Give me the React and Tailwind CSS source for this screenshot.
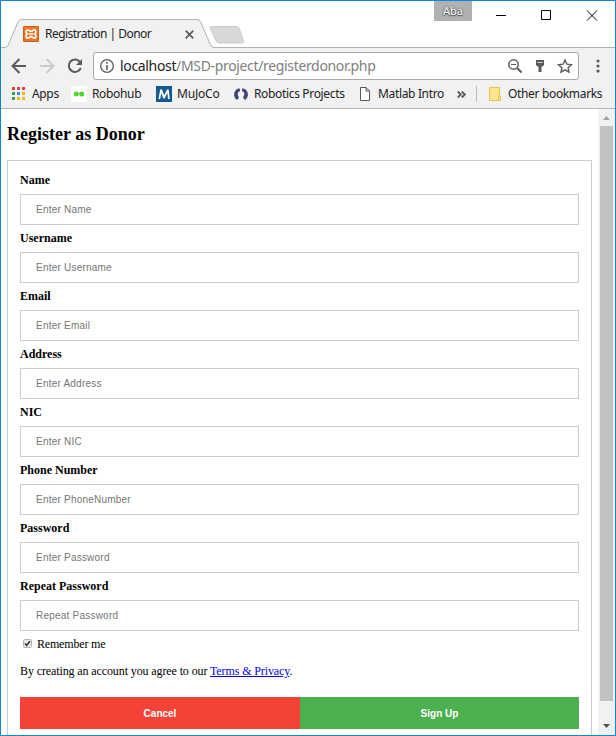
const fields = [
  ['Name', 'Enter Name'],
  ['Username', 'Enter Username'],
  ['Email', 'Enter Email'],
  ['Address', 'Enter Address'],
  ['NIC', 'Enter NIC'],
  ['Phone Number', 'Enter PhoneNumber'],
  ['Password', 'Enter Password'],
  ['Repeat Password', 'Repeat Password'],
];

function TitleBar() {
  return (
    <header className="relative h-[47px] shrink-0 bg-white">
      <svg className="absolute left-0 top-0" width="614" height="47" viewBox="1 1 614 47" fill="none">
        <path d="M1 47.5H5Q7 47.5 8 45.5L18 22Q19.3 19.5 21.5 19.5H197Q199.5 19.5 200.7 22L210.5 45Q211.5 47.5 214 47.5V49H1Z" fill="#f1f1f1" />
        <path d="M1 47.5H5Q7 47.5 8 45.5L18 22Q19.3 19.5 21.5 19.5H197Q199.5 19.5 200.7 22L210.5 45Q211.5 47.5 214 47.5H615" stroke="#b0b0b0" />
        <path d="M211.5 26.5H236.5Q238.5 26.5 239.3 28.5L243.5 41Q244 43 242 43H219Q217 43 216 41L210.3 28.5Q209.5 26.5 211.5 26.5Z" fill="#d8d8d8" stroke="#cbcbcb" />
        <path d="M496 15.5H506M541.5 10.5H550.5V19.5H541.5ZM587 10.5L597 20.5M597 10.5L587 20.5" stroke="#000" />
      </svg>
      <div className="relative flex h-full items-start">
        <div className="ml-[22px] mt-[25px] flex h-4 items-center">
          <svg width="16" height="16" viewBox="0 0 16 16" fill="none">
            <rect width="16" height="16" rx="1" fill="#ee7525" />
            <rect x=".5" y=".5" width="15" height="15" rx="1" stroke="#c9601f" />
            <path d="M4.200 8C2.700 7 2.700 3.800 4.700 3.800C6.300 3.800 6.500 5.300 8 5.300S9.700 3.800 11.300 3.800C13.300 3.800 13.300 7 11.800 8C13.300 9 13.300 12.200 11.300 12.200C9.700 12.200 9.500 10.700 8 10.700S6.300 12.200 4.700 12.200C2.700 12.200 2.700 9 4.200 8ZM6 8H10" stroke="#fff" strokeWidth="1.700" />
          </svg>
          <span className="ml-[6px] w-[140px] whitespace-nowrap text-[12px] leading-4 tracking-[-0.53px] text-[#222]">Registration | Donor</span>
          <svg width="9" height="9" viewBox="0 0 9 9" className="mt-px"><path d="M.7.7L8.300 8.300M8.300.7L.7 8.300" stroke="#5a5a5a" strokeWidth="1.700" /></svg>
        </div>
        <div className="ml-[240px] flex h-5 w-[38px] items-center justify-center bg-[#b1b1b1] text-[11px] text-white [text-shadow:0_0_2px_#333,0_1px_1px_#555]">Aba</div>
      </div>
    </header>
  );
}

function Toolbar() {
  return (
    <div className="flex h-8 shrink-0 items-center">
      <svg width="92" height="32" viewBox="1 48 92 32" fill="none" strokeWidth="2">
        <path d="M26 66H12.500M19.500 59L12.500 66L19.500 73" stroke="#5a5a5a" />
        <path d="M40 66H53.500M46.500 59L53.500 66L46.500 73" stroke="#ccc" />
        <path d="M80.200 62.200A6.200 6.200 0 1 0 80.800 68" stroke="#5a5a5a" />
        <path d="M82 59V65H76Z" fill="#5a5a5a" />
      </svg>
      <div className="mt-1 flex h-7 w-[486px] shrink-0 items-center rounded-[3px] border border-[#a9a9a9] bg-white">
        <svg className="ml-[6px]" width="14" height="14" viewBox="0 0 14 14" fill="none" stroke="#5a5a5a">
          <circle cx="7" cy="7" r="6.300" strokeWidth="1.300" /><path d="M7 6V11M7 3V4.800" strokeWidth="1.600" />
        </svg>
        <span className="ml-[6px] w-[387px] whitespace-nowrap text-[14px] leading-5 tracking-[-0.34px] text-[#808080]"><span className="text-[#222]">localhost</span>/MSD-project/registerdonor.php</span>
        <svg width="66" height="26" viewBox="507 53 66 26" fill="none" stroke="#5a5a5a">
          <circle cx="513.500" cy="64.500" r="4.700" strokeWidth="1.500" /><path d="M517 68L521.500 72.500" strokeWidth="2" /><path d="M511 64.500H516" />
          <path d="M536 60H544V65L542.500 66.500H541.500V72H538.500V66.500H537.500L536 65Z" fill="#5a5a5a" stroke="none" /><path d="M537.500 62.500H542.500" stroke="#ddd" />
          <path d="M565 60L566.900 64.200L571.500 64.700L568.100 67.700L569 72.200L565 69.900L561 72.200L561.900 67.700L558.500 64.700L563.100 64.200Z" strokeWidth="1.400" />
        </svg>
      </div>
      <svg className="ml-[17px] mt-1" width="4" height="14" viewBox="0 0 4 14" fill="#5a5a5a"><circle cx="2" cy="2" r="1.600" /><circle cx="2" cy="7" r="1.600" /><circle cx="2" cy="12" r="1.600" /></svg>
    </div>
  );
}

function Bookmarks() {
  return (
    <nav className="flex h-[29px] shrink-0 items-center whitespace-nowrap border-b border-[#b6b6b6] text-[12px] leading-4 tracking-[-0.34px] text-[#222]">
      <svg className="ml-[11px] mt-[-1px]" width="13" height="13" viewBox="0 0 13 13">
        <path d="M0 0H3V3H0ZM5 0H8V3H5ZM10 0H13V3H10Z" fill="#ea4335" />
        <path d="M0 5H3V8H0ZM0 10H3V13H0Z" fill="#34a05a" /><path d="M5 5H8V8H5Z" fill="#4285f4" />
        <path d="M10 5H13V8H10ZM5 10H8V13H5ZM10 10H13V13H10Z" fill="#f9b418" />
      </svg>
      <span className="ml-[7px] w-[39px]">Apps</span>
      <svg width="16" height="16" viewBox="0 0 16 16"><path d="M0 0H16V16H0Z" fill="#fff" /><g fill="#48d92b"><circle cx="5.300" cy="8" r="2.500" /><circle cx="10.700" cy="8" r="2.500" /></g></svg>
      <span className="ml-[5px] w-[64px]">Robohub</span>
      <svg width="16" height="16" viewBox="0 0 16 16"><path d="M0 0H16V16H0Z" fill="#155b91" /><path d="M2.500 13L4.200 3.500H6L8.200 9.300L11 3.500H12.700L13.700 13H12L11.400 7L8.700 12.500H7.400L5.200 7L4.200 13Z" fill="#fff" /></svg>
      <span className="ml-[5px] w-[56px] tracking-[-0.2px]">MuJoCo</span>
      <svg width="16" height="16" viewBox="0 0 16 16" fill="#424579"><path d="M6.700 2.200L7 5L5 6.500L4.700 9L6 11.500L4 14L2.300 12.500L1 9.500L1.500 6L3.500 3.200ZM9.300 2.200L9 5L11 6.500L11.300 9L10 11.500L12 14L13.700 12.500L15 9.500L14.500 6L12.500 3.200Z" /></svg>
      <span className="ml-[5px] w-[106px]">Robotics Projects</span>
      <svg width="10" height="14" viewBox="0 0 10 14" fill="white" stroke="#5a5a5a"><path d="M.5.5H6L9.500 4V13.500H.5ZM6 .5V4H9.500" /></svg>
      <span className="ml-[8px] w-[79px]">Matlab Intro</span>
      <svg width="9" height="7" viewBox="0 0 9 7" fill="none" stroke="#5a5a5a" strokeWidth="1.900"><path d="M.8.5L3.800 3.500L.8 6.500M4.800.5L7.800 3.500L4.800 6.500" /></svg>
      <span className="ml-[10px] h-4 w-px bg-[#bdbdbd]" />
      <svg className="ml-[12px]" width="12" height="14" viewBox="0 0 12 14" fill="#ffe591" stroke="#e9c24d"><path d="M.5.5H10.500V9.500H11.500V13.500H.5ZM9.500 13V10L10.500 9.500" /></svg>
      <span className="ml-[7px]">Other bookmarks</span>
    </nav>
  );
}

function Field({ label, hint }) {
  return (
    <label className="mb-[5px] block">
      <span className="block h-4 text-[12px] font-bold leading-4">{label}</span>
      <input placeholder={hint} className="mt-[6px] block h-[31px] w-full border border-[#ccc] px-[15px] font-['Liberation_Sans',Arial,sans-serif] text-[10px] tracking-[0.22px] placeholder:text-[#757575]" />
    </label>
  );
}

export default function App() {
  return (
    <div className="flex h-[736px] w-[616px] flex-col overflow-hidden border border-[#1883d7] bg-[#f1f1f1] font-['Noto_Sans','Open_Sans',sans-serif]">
      <TitleBar />
      <Toolbar />
      <Bookmarks />
      <div className="flex min-h-0 flex-1 bg-white">
        <main className="w-[597px] overflow-hidden pl-[6px] font-['Liberation_Serif','Times_New_Roman',serif] text-black">
          <h2 className="mt-[14px] h-[22px] text-[18px] font-bold leading-[22px]">Register as Donor</h2>
          <form className="mt-[15px] h-[590px] w-[585px] border border-[#ccc] px-3 pt-[11px]">
            {fields.map(([label, hint]) => <Field key={label} label={label} hint={hint} />)}
            <div className="flex h-4 items-center text-[12px] leading-4 tracking-[-0.18px]">
              <svg className="mb-px ml-[3px] mr-[5px]" width="9" height="9" viewBox="0 0 9 9" fill="none"><rect x=".5" y=".5" width="8" height="8" rx="1" fill="#e6e6e6" stroke="#b5b5b5" /><path d="M2 4.500L3.700 6.300L7 2.300" stroke="#333" strokeWidth="1.500" /></svg>
              Remember me
            </div>
            <p className="mt-[11px] h-4 text-[12px] leading-4 tracking-[-0.11px]">By creating an account you agree to our <a className="text-[#0000ee] underline">Terms &amp; Privacy</a>.</p>
            <div className="mt-[18px] flex h-8 font-['Liberation_Sans',Arial,sans-serif] text-[10px] font-bold text-white">
              <button type="button" className="w-[280px] bg-[#f44336]">Cancel</button>
              <button type="button" className="flex-1 bg-[#4caf50]">Sign Up</button>
            </div>
          </form>
        </main>
        <div className="flex w-[17px] flex-col items-center bg-[#f1f1f1]">
          <svg width="17" height="17" viewBox="0 0 17 17"><path d="M5 11L8.500 7L12 11Z" fill="#a3a3a3" /></svg>
          <div className="h-[575px] w-[13px] bg-[#c1c1c1]" />
          <svg className="mt-4" width="17" height="17" viewBox="0 0 17 17"><path d="M5 7L8.500 11L12 7Z" fill="#505050" /></svg>
        </div>
      </div>
    </div>
  );
}
